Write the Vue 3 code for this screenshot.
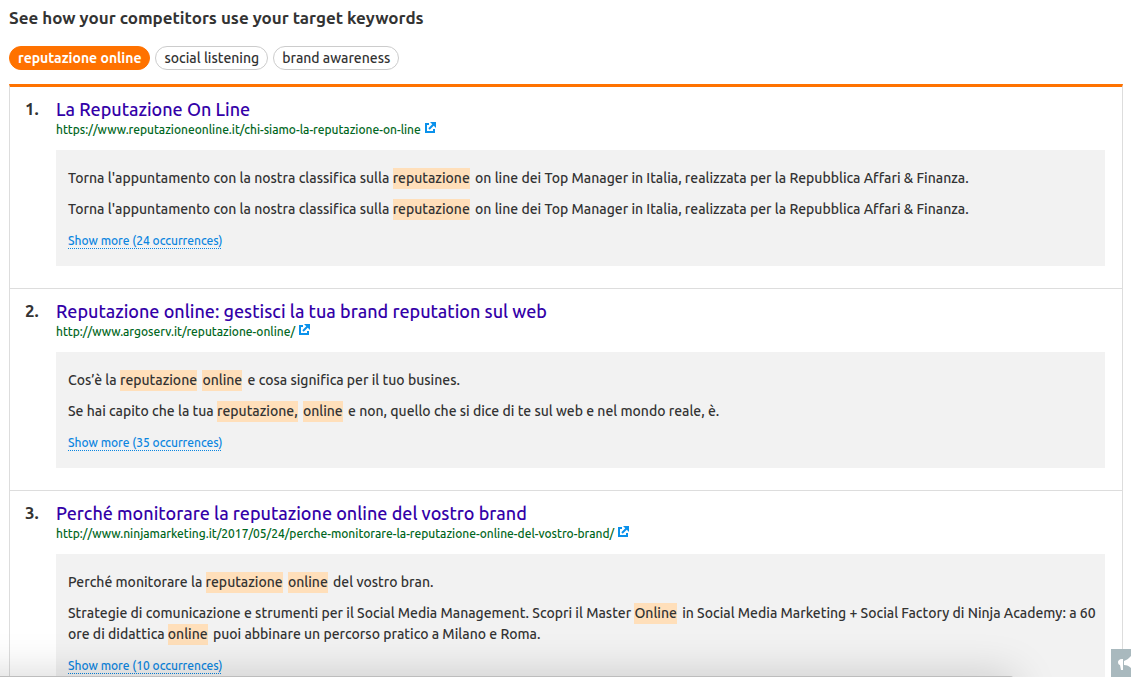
<script setup>
import { ref } from 'vue'

const keywords = ['reputazione online', 'social listening', 'brand awareness']
const active = ref(keywords[0])

// Text between asterisks is highlighted as a matched keyword.
const results = [
  {
    title: 'La Reputazione On Line',
    url: 'https://www.reputazioneonline.it/chi-siamo-la-reputazione-on-line',
    count: 24,
    lines: [
      "Torna l'appuntamento con la nostra classifica sulla *reputazione* on line dei Top Manager in Italia, realizzata per la Repubblica Affari & Finanza.",
      "Torna l'appuntamento con la nostra classifica sulla *reputazione* on line dei Top Manager in Italia, realizzata per la Repubblica Affari & Finanza."
    ]
  },
  {
    title: 'Reputazione online: gestisci la tua brand reputation sul web',
    url: 'http://www.argoserv.it/reputazione-online/',
    count: 35,
    lines: [
      'Cos’è la *reputazione* *online* e cosa significa per il tuo busines.',
      'Se hai capito che la tua *reputazione,* *online* e non, quello che si dice di te sul web e nel mondo reale, è.'
    ]
  },
  {
    title: 'Perché monitorare la reputazione online del vostro brand',
    url: 'http://www.ninjamarketing.it/2017/05/24/perche-monitorare-la-reputazione-online-del-vostro-brand/',
    count: 10,
    lines: [
      'Perché monitorare la *reputazione* *online* del vostro bran.',
      'Strategie di comunicazione e strumenti per il Social Media Management. Scopri il Master *Online* in Social Media Marketing + Social Factory di Ninja Academy: a 60 ore di didattica *online* puoi abbinare un percorso pratico a Milano e Roma.'
    ]
  }
]

const parts = (line) => line.split('*').map((text, i) => ({ text, hit: i % 2 === 1 }))
</script>

<template>
  <main class="page">
    <h1 class="heading">See how your competitors use your target keywords</h1>
    <div class="pills">
      <button
        v-for="k in keywords"
        :key="k"
        type="button"
        class="pill"
        :class="{ active: k === active }"
        :aria-pressed="k === active"
        @click="active = k"
      >{{ k }}</button>
    </div>
    <ol class="results">
      <li v-for="(r, i) in results" :key="r.url" class="result">
        <span class="number">{{ i + 1 }}.</span>
        <div class="body">
          <h2 class="title"><a :href="r.url">{{ r.title }}</a></h2>
          <div class="address">
            <a class="url" :href="r.url">{{ r.url }}</a>
            <a class="open" :href="r.url" target="_blank" aria-label="Open in a new tab">
              <svg width="11" height="11" viewBox="0 0 11 11" fill="none" stroke="#0a91eb" stroke-width="2">
                <path d="M4 2H1V10H9V7" />
                <path d="M4 7L9 2" />
                <path d="M5 0H11V6L9 4L7 2Z" fill="#0a91eb" stroke="none" />
              </svg>
            </a>
          </div>
          <div class="snippets">
            <p v-for="(line, n) in r.lines" :key="n"><template v-for="(p, m) in parts(line)" :key="m"><mark v-if="p.hit">{{ p.text }}</mark><template v-else>{{ p.text }}</template></template></p>
            <button type="button" class="more">Show more ({{ r.count }} occurrences)</button>
          </div>
        </div>
      </li>
    </ol>
    <button type="button" class="feedback" aria-label="Feedback">
      <svg width="20" height="28" viewBox="0 0 20 28" fill="#fff">
        <path d="M11 10C8 10 7 12 7 13C7 15 8 16 9 16L10 21H12V10Z" />
        <path d="M13 12C16 11 18 9 20 7V19C18 17 16 16 13 16Z" />
      </svg>
    </button>
    <div class="shade" aria-hidden="true"></div>
  </main>
</template>

<style>
body {
  margin: 0;
  background: #fff;
}
</style>

<style scoped>
.page {
  box-sizing: border-box;
  height: 100vh;
  overflow: hidden;
  padding: 6px 8px 0 9px;
  font-family: Ubuntu, "Noto Sans", sans-serif;
  font-size: 14px;
  font-weight: 500;
  font-variant-ligatures: none;
  color: #333;
}
.heading {
  margin: 0 0 16px;
  font-size: 17px;
  line-height: 24px;
  font-weight: 700;
}
.pills {
  display: flex;
  gap: 5px;
  margin-bottom: 14px;
}
.pill {
  height: 24px;
  padding: 0 8px;
  border: 1px solid #ccc;
  border-radius: 12px;
  background: #fff;
  color: #333;
  font: inherit;
  line-height: 22px;
}
.pill.active {
  border-color: #ff7200;
  background: #ff7200;
  color: #fff;
  font-weight: 700;
}
.results {
  margin: 0;
  padding: 0;
  list-style: none;
  border: 1px solid #ddd;
  border-top: 3px solid #ff7200;
}
.result {
  display: flex;
  padding: 11px 17px 22px 15px;
  border-bottom: 1px solid #ddd;
}
.number {
  flex: 0 0 31px;
  font-size: 17px;
  line-height: 22px;
  font-weight: 700;
}
.body {
  flex: 1;
  min-width: 0;
}
.title {
  margin: 0 0 1px;
  font-size: 18px;
  line-height: 22px;
  font-weight: 500;
}
.title a {
  color: #3300a8;
  text-decoration: none;
}
.address {
  display: flex;
  gap: 4px;
  margin-bottom: 12px;
  font-size: 12px;
  line-height: 17px;
}
.url {
  color: #006621;
  text-decoration: none;
}
.open svg {
  display: block;
  margin-top: 1px;
}
.snippets {
  padding: 18px 8px 15px 12px;
  background: #f2f2f2;
  line-height: 21px;
}
.snippets p {
  margin: 0 0 10px;
}
mark {
  display: inline-block;
  margin-right: 2px;
  background: #ffdfba;
  color: inherit;
}
.more {
  display: block;
  padding: 0;
  border: 0;
  background: none;
  color: #0a85e0;
  font: inherit;
  font-size: 12px;
  line-height: 21px;
  text-decoration: underline dotted 1px;
  text-underline-offset: 3px;
}
.feedback {
  position: fixed;
  right: 0;
  bottom: 0;
  width: 20px;
  height: 28px;
  padding: 0;
  border: 0;
  background: #a9b9be;
}
.feedback svg {
  display: block;
}
.shade {
  position: fixed;
  left: -80px;
  right: 116px;
  bottom: -39px;
  height: 40px;
  border-radius: 5px;
  background: #bdbdbd;
  box-shadow: 0 0 44px rgba(0, 0, 0, 0.18);
  pointer-events: none;
}
</style>
